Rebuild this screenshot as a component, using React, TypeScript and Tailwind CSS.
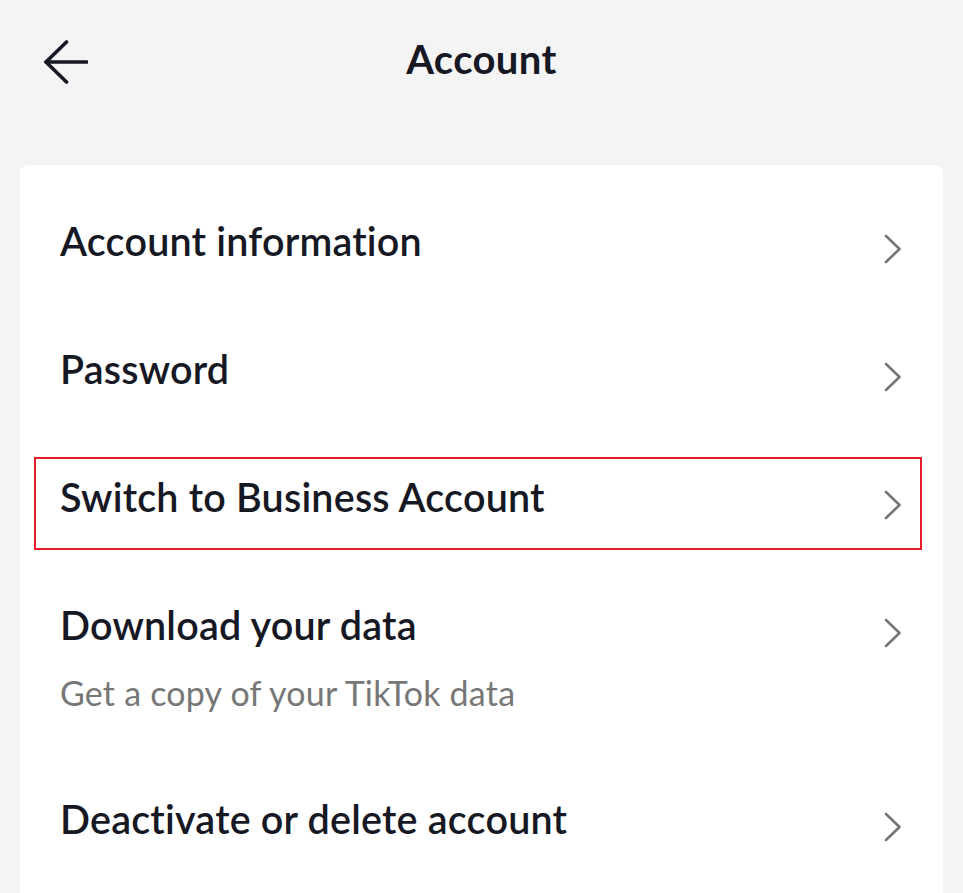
import React from "react";

const Chevron = () => (
  <svg width="18" height="30" viewBox="0 0 18 30" fill="none" className="shrink-0">
    <path d="M2 2 L15.5 15 L2 28" stroke="#757575" strokeWidth="2.6" strokeLinecap="round" strokeLinejoin="round" />
  </svg>
);

const Row = ({ title, sub, highlight }: { title: string; sub?: string; highlight?: boolean }) => (
  <div className={`relative flex items-start justify-between pl-[40px] pr-[41px] ${sub ? "h-[194px]" : "h-[128px]"}`}>
    <div className="flex flex-col pt-[43px]">
      <span className="text-[39.5px] leading-[40px] font-semibold tracking-[0.2px] text-[#161823]">{title}</span>
      {sub && <span className="mt-[28px] text-[34px] leading-[40px] tracking-[0.2px] text-[#777777]">{sub}</span>}
    </div>
    <div className="pt-[56px]">
      <Chevron />
    </div>
    {highlight && (
      <div className="absolute top-[23px] bottom-[12px] left-[14px] right-[21px] border-2 border-[#e51d2a] pointer-events-none" />
    )}
  </div>
);

export default function App() {
  return (
    <div className="min-h-[893px] h-[893px] overflow-hidden bg-[#f4f4f4]" style={{ fontFamily: "Lato, 'Open Sans', sans-serif" }}>
      <div className="relative flex h-[165px] items-start justify-center pt-[37px]">
        <div className="absolute left-[44px] top-[40px]">
          <svg width="44" height="44" viewBox="0 0 44 44" fill="none">
            <path d="M2 22 H43" stroke="#161823" strokeWidth="3.6" strokeLinecap="round" />
            <path d="M22.5 2 L2 22 L22.5 42" stroke="#161823" strokeWidth="3.6" strokeLinecap="round" strokeLinejoin="round" />
          </svg>
        </div>
        <h1 className="text-[40px] leading-[44px] font-bold tracking-[0.4px] text-[#161823]">Account</h1>
      </div>
      <div className="mx-[20px] rounded-t-[8px] bg-white pt-[13px] min-h-[728px]">
        <Row title="Account information" />
        <Row title="Password" />
        <Row title="Switch to Business Account" highlight />
        <Row title="Download your data" sub="Get a copy of your TikTok data" />
        <Row title="Deactivate or delete account" />
      </div>
    </div>
  );
}
